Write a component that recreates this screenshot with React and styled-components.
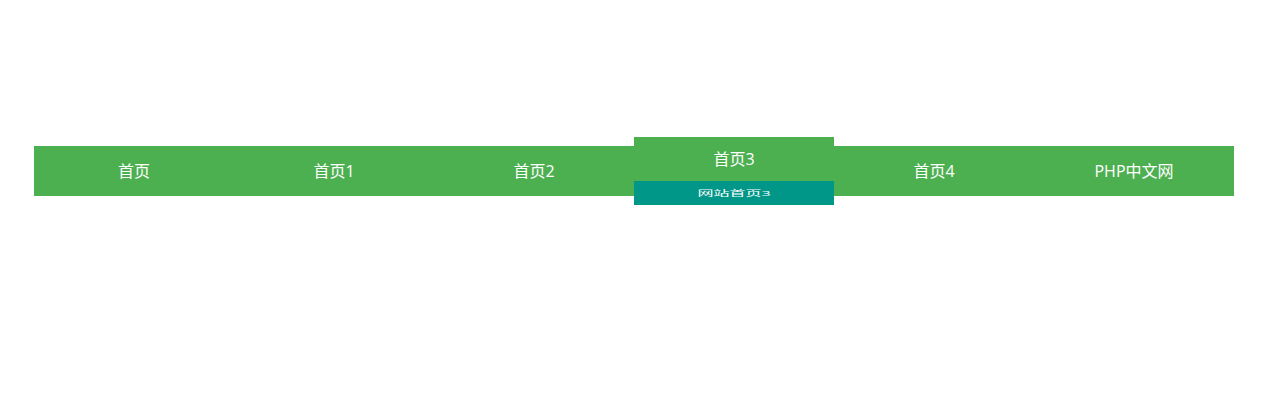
import React from "react";
import styled, { createGlobalStyle } from "styled-components";

const Global = createGlobalStyle`
  html, body { margin: 0; padding: 0; background: #fff; }
  body { font-family: "Open Sans", "Noto Sans CJK SC", sans-serif; }
`;

const Page = styled.div`
  padding: 146px 0 0 34px;
  height: 408px;
  box-sizing: border-box;
`;

const Bar = styled.ul`
  list-style: none;
  margin: 0;
  padding: 0;
  display: flex;
  align-items: flex-start;
  width: 1200px;
  height: 50px;
  background: #4caf50;
`;

const Item = styled.li`
  width: 200px;
  flex: 0 0 200px;
  display: flex;
  flex-direction: column;
  color: #fff;
  font-size: 16px;
  text-align: center;
  transform: ${(p) => (p.$active ? "translateY(-9px)" : "none")};
  position: relative;
  z-index: ${(p) => (p.$active ? 1 : 0)};
`;

const Label = styled.span`
  display: block;
  line-height: ${(p) => (p.$active ? "44px" : "50px")};
  height: ${(p) => (p.$active ? "44px" : "50px")};
  background: #4caf50;
`;

const Sub = styled.span`
  display: block;
  height: 24px;
  line-height: 24px;
  background: #009688;
  color: #fff;
  font-size: 16px;
`;

const SubText = styled.span`
  display: inline-block;
  transform: scaleY(0.5);
`;

const items = ["首页", "首页1", "首页2", "首页3", "首页4", "PHP中文网"];

export default function App() {
  return (
    <Page>
      <Global />
      <Bar>
        {items.map((t, i) => {
          const active = i === 3;
          return (
            <Item key={t} $active={active}>
              <Label $active={active}>{t}</Label>
              {active && (
                <Sub>
                  <SubText>网站首页3</SubText>
                </Sub>
              )}
            </Item>
          );
        })}
      </Bar>
    </Page>
  );
}
